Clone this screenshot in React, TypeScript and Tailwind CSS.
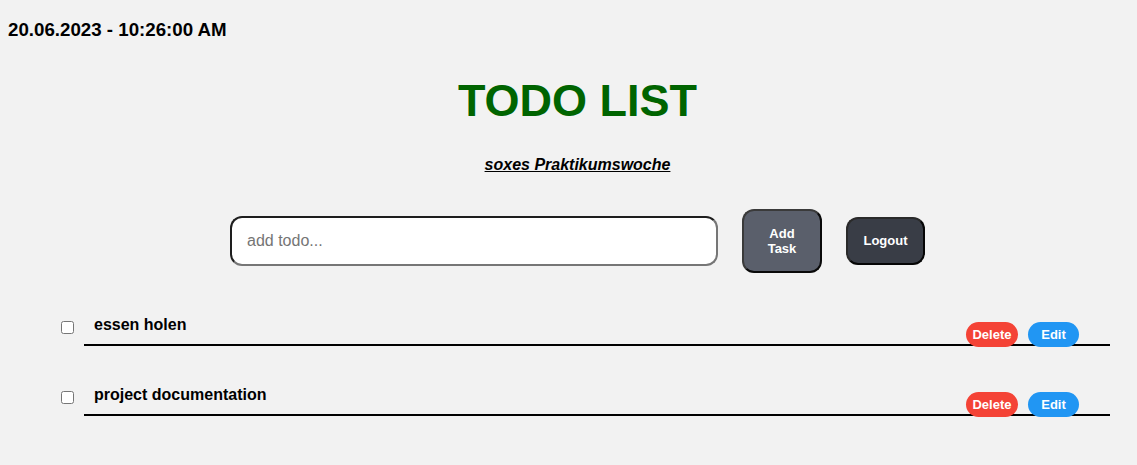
import React from "react";

const todos = ["essen holen", "project documentation"];

export default function App() {
  return (
    <div className="min-h-[465px] w-full bg-[#f2f2f2] font-['Liberation_Sans',Arial,sans-serif] text-black">
      <div className="pl-[8px] pt-[18.5px]">
        <h3 className="text-[18.72px] leading-[22px] font-bold">20.06.2023 - 10:26:00 AM</h3>
      </div>

      <div className="pl-[18px] text-center">
        <h1 className="mt-[34px] text-[45px] leading-[52px] font-bold text-[#006400]">TODO LIST</h1>
        <p className="mt-[29px] text-[16px] leading-[18px] font-bold italic underline">soxes Praktikumswoche</p>

        <div className="mt-[35px] flex items-center justify-center gap-[24px]">
          <input
            type="text"
            placeholder="add todo..."
            className="h-[50px] w-[488px] rounded-[12px] border-2 border-t-[#1e1e1e] border-l-[#1e1e1e] border-r-[#767676] border-b-[#767676] bg-white pl-[15px] text-[16px] outline-none placeholder:text-[#757575]"
          />
          <button className="h-[64px] w-[80px] rounded-[12px] border-2 border-t-[#3a3a3a] border-l-[#3a3a3a] border-r-[#0a0a0a] border-b-[#0a0a0a] bg-[#5a5f6b] text-[13px] leading-[15px] font-bold text-white">
            Add
            <br />
            Task
          </button>
          <button className="h-[48px] w-[79px] rounded-[12px] border-2 border-t-[#2a2a2a] border-l-[#2a2a2a] border-r-[#050505] border-b-[#050505] bg-[#393d46] text-[13px] leading-[15px] font-bold text-white">
            Logout
          </button>
        </div>
      </div>

      <div className="mt-[43px] flex flex-col gap-[40px] pr-[27px]">
        {todos.map((t) => (
          <div key={t} className="flex items-start">
            <input type="checkbox" className="m-0 ml-[61px] mt-[5px] h-[13px] w-[13px]" />
            <div className="ml-[10px] flex-1 border-b-2 border-black pb-[10px]">
              <div className="flex h-[18px] items-start justify-between">
                <span className="pl-[10px] text-[16px] leading-[18px] font-bold">{t}</span>
                <div className="mr-[31px] mt-[6.5px] flex gap-[10px]">
                  <button className="h-[25px] w-[52px] rounded-full bg-[#f44336] text-[13px] leading-[25px] font-bold text-white">
                    Delete
                  </button>
                  <button className="h-[25px] w-[51px] rounded-full bg-[#2196f3] text-[13px] leading-[25px] font-bold text-white">
                    Edit
                  </button>
                </div>
              </div>
            </div>
          </div>
        ))}
      </div>
    </div>
  );
}
